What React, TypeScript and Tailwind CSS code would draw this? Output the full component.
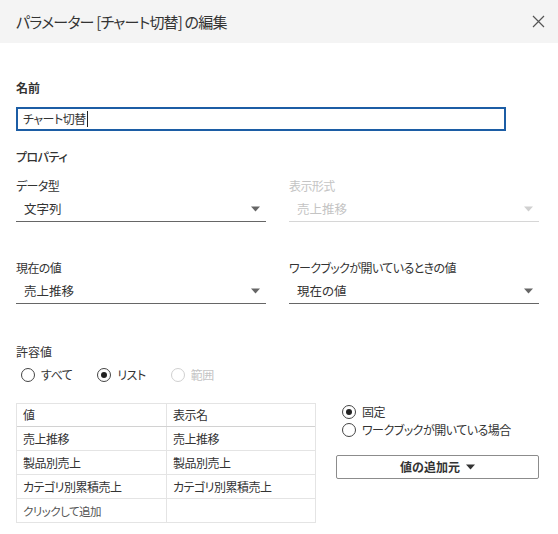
const font = { fontFamily: '"Noto Sans CJK JP", "Noto Sans", sans-serif', fontFeatureSettings: '"palt"' };

function Caret({ disabled }: { disabled?: boolean }) {
  return (
    <svg width="9" height="6" viewBox="0 0 9 6" className="shrink-0">
      <path d="M0 0.5 L9 0.5 L4.5 5.5 Z" fill={disabled ? "#d0d0d0" : "#666666"} />
    </svg>
  );
}

function Select({ label, value, disabled }: { label: string; value: string; disabled?: boolean }) {
  return (
    <div className="w-[250px]">
      <div className={`text-[12px] leading-[18px] tracking-[-0.6px] ${disabled ? "text-[#c4c4c4]" : "text-[#333]"}`}>
        {label}
      </div>
      <div
        className={`flex h-[27px] items-center justify-between border-b pl-2 pr-[6px] pt-[2px] ${
          disabled ? "border-[#d6d6d6]" : "border-[#666]"
        }`}
      >
        <span className={`text-[12.5px] leading-[18px] ${disabled ? "text-[#c4c4c4]" : "text-[#333]"}`}>{value}</span>
        <Caret disabled={disabled} />
      </div>
    </div>
  );
}

function Radio({ label, checked, disabled }: { label: string; checked?: boolean; disabled?: boolean }) {
  return (
    <div className="flex items-center gap-[6px] whitespace-nowrap">
      <span
        className={`flex h-[14px] w-[14px] shrink-0 items-center justify-center rounded-full border ${
          disabled ? "border-[#d0d0d0]" : "border-[#444]"
        }`}
      >
        {checked && <span className="h-[6px] w-[6px] rounded-full bg-[#222]" />}
      </span>
      <span
        className={`text-[12px] leading-[18px] tracking-[-0.5px] ${disabled ? "text-[#c4c4c4]" : "text-[#333]"}`}
      >
        {label}
      </span>
    </div>
  );
}

const rows = [
  ["売上推移", "売上推移"],
  ["製品別売上", "製品別売上"],
  ["カテゴリ別累積売上", "カテゴリ別累積売上"],
];

export default function App() {
  return (
    <div className="h-[534px] w-[558px] bg-white text-[#333]" style={font}>
      <div className="flex h-[43px] items-center justify-between bg-[#f4f4f4] pl-4 pr-[13px]">
        <span className="text-[15px] leading-[22px] tracking-[-0.8px] text-[#333]">パラメーター [チャート切替] の編集</span>
        <svg width="13" height="13" viewBox="0 0 13 13">
          <path d="M1 1 L12 12 M12 1 L1 12" stroke="#555" strokeWidth="1.2" />
        </svg>
      </div>

      <div className="px-4">
        <div className="mt-[36px] text-[12px] font-bold leading-[18px]">名前</div>
        <div className="mt-[10px] flex h-[24px] w-[490px] items-center border-2 border-[#1c5da5] pl-[5px]">
          <span className="text-[12px] leading-[18px] tracking-[-0.5px]">チャート切替</span>
          <span className="ml-[1px] h-[16px] w-px bg-[#222]" />
        </div>

        <div className="mt-[17px] text-[12px] font-medium leading-[18px] tracking-[-0.5px]">プロパティ</div>

        <div className="mt-[11px] flex gap-[23px]">
          <Select label="データ型" value="文字列" />
          <Select label="表示形式" value="売上推移" disabled />
        </div>

        <div className="mt-[37px] flex gap-[23px]">
          <Select label="現在の値" value="売上推移" />
          <Select label="ワークブックが開いているときの値" value="現在の値" />
        </div>

        <div className="mt-[39px] text-[12px] leading-[18px]">許容値</div>
        <div className="mt-[5px] ml-[5px] flex gap-[25px]">
          <Radio label="すべて" />
          <Radio label="リスト" checked />
          <Radio label="範囲" disabled />
        </div>

        <div className="mt-[19px] flex">
          <div className="w-[300px] border border-[#e4e4e4] text-[12px] leading-[18px] tracking-[-0.5px]">
            <div className="flex h-[23px] border-b border-[#d2d2d2]">
              <div className="flex w-[150px] items-center border-r border-[#e4e4e4] pl-[6px]">値</div>
              <div className="flex flex-1 items-center pl-[6px]">表示名</div>
            </div>
            {rows.map(([v, d]) => (
              <div key={v} className="flex h-[24px] border-b border-[#e4e4e4]">
                <div className="flex w-[150px] items-center border-r border-[#e4e4e4] pl-[6px]">{v}</div>
                <div className="flex flex-1 items-center pl-[6px]">{d}</div>
              </div>
            ))}
            <div className="flex h-[23px]">
              <div className="flex w-[150px] items-center border-r border-[#e4e4e4] pl-[6px] text-[11.5px] text-[#555]">
                クリックして追加
              </div>
              <div className="flex-1" />
            </div>
          </div>

          <div className="ml-[20px] flex w-[203px] flex-col">
            <div className="ml-[6px] flex flex-col">
              <Radio label="固定" checked />
              <Radio label="ワークブックが開いている場合" />
            </div>
            <button className="mt-[16px] flex h-[24px] w-[203px] items-center justify-center gap-[6px] rounded-[2px] border border-[#8c8c8c] bg-white text-[12px] font-bold leading-[18px] text-[#333]">
              値の追加元
              <svg width="9" height="6" viewBox="0 0 9 6">
                <path d="M0 0.5 L9 0.5 L4.5 5.5 Z" fill="#333" />
              </svg>
            </button>
          </div>
        </div>
      </div>
    </div>
  );
}
